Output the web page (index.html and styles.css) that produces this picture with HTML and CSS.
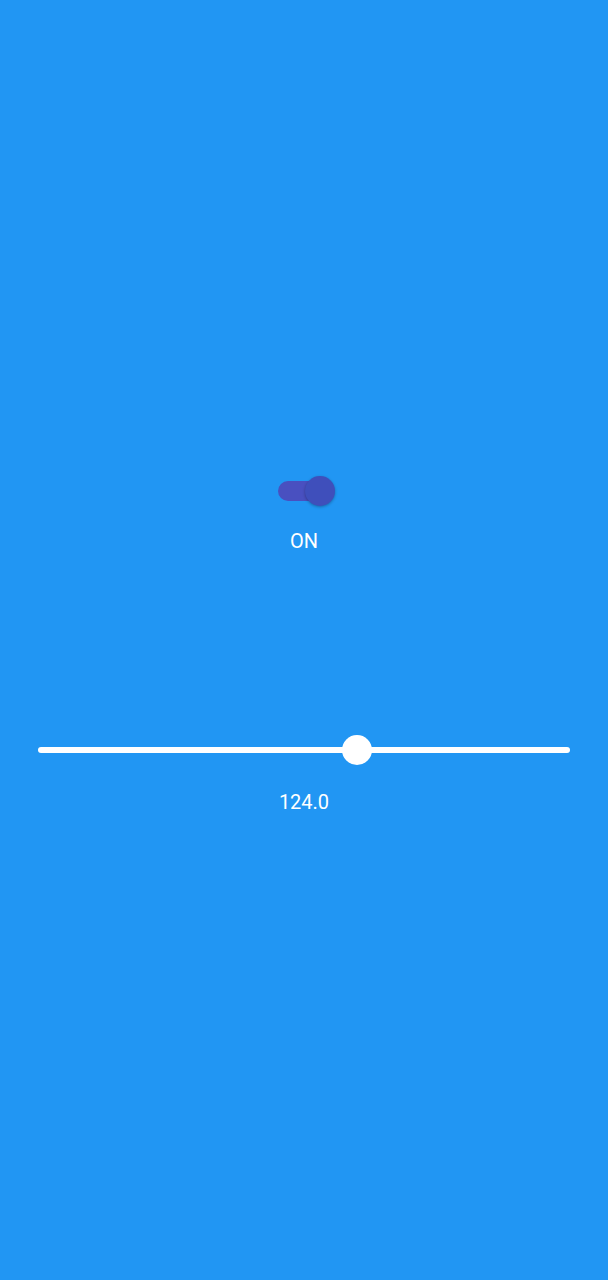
FILE: index.html
```html
<!DOCTYPE html>
<html>
<head>
<meta charset="utf-8">
<link rel="stylesheet" href="styles.css">
</head>
<body>
<main class="screen">
  <div class="switch">
    <div class="switch-track"></div>
    <div class="switch-thumb"></div>
  </div>
  <div class="label label-on">ON</div>
  <div class="slider">
    <div class="slider-track"></div>
    <div class="slider-thumb" style="left: 60%"></div>
  </div>
  <div class="label label-value">124.0</div>
</main>
</body>
</html>
```
FILE: styles.css
```css
html, body {
  margin: 0;
  padding: 0;
  background: #2196F3;
}
.screen {
  height: 1280px;
  box-sizing: border-box;
  padding-top: 475px;
  display: flex;
  flex-direction: column;
  align-items: center;
  font-family: Roboto, "Noto Sans", sans-serif;
  color: #ffffff;
}
.switch {
  position: relative;
  width: 58px;
  height: 32px;
  margin-left: 6px;
}
.switch-track {
  position: absolute;
  left: 0;
  top: 6px;
  width: 51px;
  height: 20px;
  border-radius: 10px;
  background: #4950c0;
}
.switch-thumb {
  position: absolute;
  left: 27px;
  top: 1px;
  width: 30px;
  height: 30px;
  border-radius: 50%;
  background: #3f4fbb;
  box-shadow: 0 1px 3px rgba(0, 0, 0, 0.3);
}
.label {
  font-size: 20px;
  line-height: 24px;
}
.label-on {
  margin-top: 22px;
}
.slider {
  position: relative;
  align-self: stretch;
  margin: 181px 38px 0 38px;
  height: 32px;
}
.slider-track {
  position: absolute;
  left: 0;
  right: 0;
  top: 13px;
  height: 6px;
  border-radius: 3px;
  background: #ffffff;
}
.slider-thumb {
  position: absolute;
  top: 1px;
  width: 30px;
  height: 30px;
  margin-left: -15px;
  border-radius: 50%;
  background: #ffffff;
}
.label-value {
  margin-top: 24px;
}
```
